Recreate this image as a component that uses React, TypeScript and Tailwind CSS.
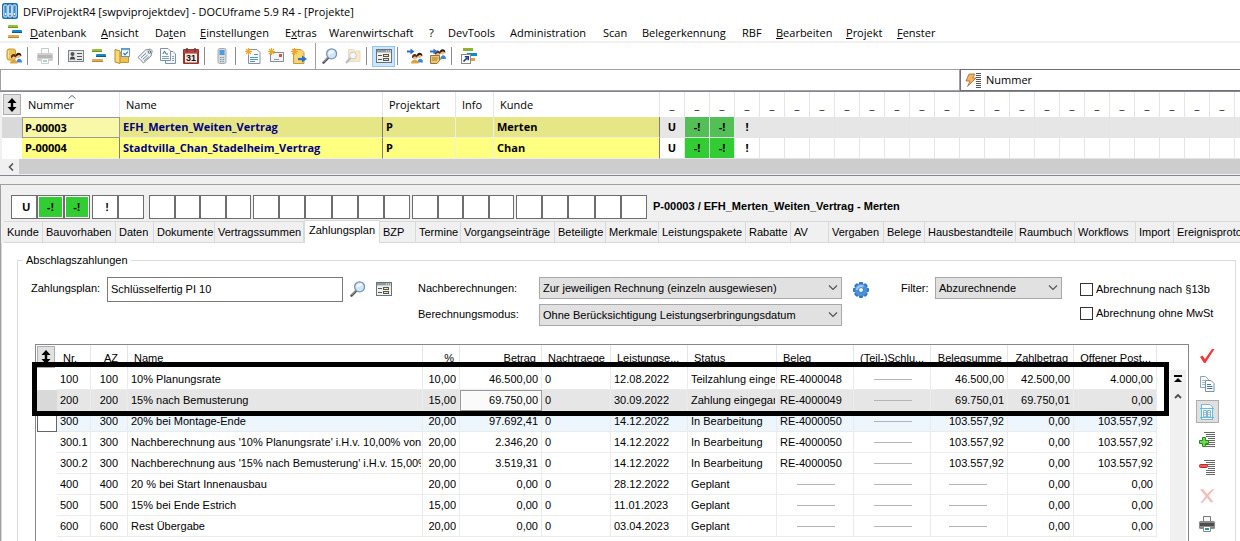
import React from "react";

const menuItems = [
  { pre: "", key: "D", post: "atenbank", w: "w-[71px]" },
  { pre: "", key: "A", post: "nsicht", w: "w-[54px]" },
  { pre: "Da", key: "t", post: "en", w: "w-[45px]" },
  { pre: "", key: "E", post: "instellungen", w: "w-[85px]" },
  { pre: "E", key: "x", post: "tras", w: "w-[44px]" },
  { pre: "Warenwirtschaft", key: "", post: "", w: "w-[100px]" },
  { pre: "?", key: "", post: "", w: "w-[19px]" },
  { pre: "DevTools", key: "", post: "", w: "w-[62px]" },
  { pre: "Administration", key: "", post: "", w: "w-[93px]" },
  { pre: "Scan", key: "", post: "", w: "w-[39px]" },
  { pre: "Belegerkennung", key: "", post: "", w: "w-[100px]" },
  { pre: "RBF", key: "", post: "", w: "w-[34px]" },
  { pre: "", key: "B", post: "earbeiten", w: "w-[70px]" },
  { pre: "", key: "P", post: "rojekt", w: "w-[51px]" },
  { pre: "", key: "F", post: "enster", w: "w-[50px]" },
];

const tabs = [
  { label: "Kunde", w: "w-[39px]" },
  { label: "Bauvorhaben", w: "w-[73px]" },
  { label: "Daten", w: "w-[38px]" },
  { label: "Dokumente", w: "w-[61px]" },
  { label: "Vertragssummen", w: "w-[89px]" },
  { label: "Zahlungsplan", w: "w-[76px]" },
  { label: "BZP", w: "w-[36px]" },
  { label: "Termine", w: "w-[45px]" },
  { label: "Vorgangseinträge", w: "w-[94px]" },
  { label: "Beteiligte", w: "w-[51px]" },
  { label: "Merkmale", w: "w-[53px]" },
  { label: "Leistungspakete", w: "w-[87px]" },
  { label: "Rabatte", w: "w-[45px]" },
  { label: "AV", w: "w-[38px]" },
  { label: "Vergaben", w: "w-[55px]" },
  { label: "Belege", w: "w-[41px]" },
  { label: "Hausbestandteile", w: "w-[91px]" },
  { label: "Raumbuch", w: "w-[59px]" },
  { label: "Workflows", w: "w-[61px]" },
  { label: "Import", w: "w-[38px]" },
  { label: "Ereignisprotokoll", w: "w-[100px]" },
];

const payments = [
  ["100", "100", "10% Planungsrate", "10,00", "46.500,00", "0", "12.08.2022", "Teilzahlung eingegangen", "RE-4000048", "", "46.500,00", "42.500,00", "4.000,00"],
  ["200", "200", "15% nach Bemusterung", "15,00", "69.750,00", "0", "30.09.2022", "Zahlung eingegangen", "RE-4000049", "", "69.750,01", "69.750,01", "0,00"],
  ["300", "300", "20% bei Montage-Ende", "20,00", "97.692,41", "0", "14.12.2022", "In Bearbeitung", "RE-4000050", "", "103.557,92", "0,00", "103.557,92"],
  ["300.1", "300", "Nachberechnung aus '10% Planungsrate' i.H.v. 10,00% von", "20,00", "2.346,20", "0", "14.12.2022", "In Bearbeitung", "RE-4000050", "", "103.557,92", "0,00", "103.557,92"],
  ["300.2", "300", "Nachberechnung aus '15% nach Bemusterung' i.H.v. 15,00%", "20,00", "3.519,31", "0", "14.12.2022", "In Bearbeitung", "RE-4000050", "", "103.557,92", "0,00", "103.557,92"],
  ["400", "400", "20 % bei Start Innenausbau", "20,00", "0,00", "0", "28.12.2022", "Geplant", "", "", "", "0,00", "0,00"],
  ["500", "500", "15% bei Ende Estrich", "15,00", "0,00", "0", "11.01.2023", "Geplant", "", "", "", "0,00", "0,00"],
  ["600", "600", "Rest Übergabe", "20,00", "0,00", "0", "03.04.2023", "Geplant", "", "", "", "0,00", "0,00"],
];

const RIGHT = { head: "pr-[5px] text-right", cell: "pr-[3px] text-right" };
const LEFT = { head: "pl-1.5 text-left", cell: "pl-[3px] pr-px text-left" };
const INDENTED_RIGHT = { head: "pr-[9px] text-right", cell: "pr-[9px] text-right" };

const paymentColumns = [
  { label: "Nr.", w: "w-[34px]", align: LEFT },
  { label: "AZ", w: "w-[37px]", align: INDENTED_RIGHT },
  { label: "Name", w: "w-[295px]", align: LEFT },
  { label: "%", w: "w-[37px]", align: RIGHT },
  { label: "Betrag", w: "w-[82px]", align: RIGHT },
  { label: "Nachtraege", w: "w-[69px]", align: LEFT },
  { label: "Leistungse...", w: "w-[77px]", align: LEFT },
  { label: "Status", w: "w-[89px]", align: LEFT },
  { label: "Beleg", w: "w-[77px]", align: LEFT },
  { label: "(Teil-)Schlu...", w: "w-[77px]", align: LEFT },
  { label: "Belegsumme", w: "w-[77px]", align: RIGHT },
  { label: "Zahlbetrag", w: "w-[66px]", align: RIGHT },
  { label: "Offener Post...", w: "w-[83px]", align: RIGHT },
];

const flagColumns = Array.from({ length: 24 }, (_, i) => i);
const flags = ["U", "-!", "-!", "!"];

function Svg({ children, faded = false }: { children: React.ReactNode; faded?: boolean }) {
  return (
    <svg viewBox="0 0 16 16" aria-hidden="true" className={faded ? "h-4 w-4 shrink-0 opacity-40" : "h-4 w-4 shrink-0"}>
      {children}
    </svg>
  );
}

function GanttIcon() {
  return (
    <Svg>
      <rect x="1" y="1" width="10" height="3" rx="1" fill="#9bbd3c" />
      <rect x="1" y="3" width="10" height="1" fill="#6f9420" />
      <rect x="5" y="6" width="10" height="3" rx="1" fill="#1586c8" />
      <rect x="5" y="8" width="10" height="1" fill="#0c5c94" />
      <rect x="1" y="11" width="11" height="3" rx="1" fill="#e3aa52" />
      <rect x="1" y="13" width="11" height="1" fill="#b98536" />
    </Svg>
  );
}

function PrinterIcon({ faded = false }: { faded?: boolean }) {
  return (
    <Svg faded={faded}>
      <path d="M4.5 0.5H11.5V6H4.5Z" fill="#f4f8fa" stroke="#777" />
      <rect x="0" y="5" width="16" height="8" rx="1.5" fill="#8a8a8a" />
      <rect x="1" y="7" width="14" height="3" fill="#4d4d4d" />
      <path d="M4.5 10.5H11.5V15.5H4.5Z" fill="#fff" stroke="#888" />
      <path d="M6 12H8V14H6Z" fill="#2ba34a" />
      <path d="M8 12H10V14H8Z" fill="#2588d0" />
    </Svg>
  );
}

function SearchIcon() {
  return (
    <Svg>
      <path d="M6.4 9.6L1.5 14.7" stroke="#555" strokeWidth="2.4" strokeLinecap="round" />
      <path d="M6 9.3L1.6 14" stroke="#ccc" strokeWidth="0.8" />
      <circle cx="9.6" cy="5.8" r="5" fill="#cfe5fa" stroke="#7894ae" strokeWidth="1.3" />
      <path d="M6.4 6.2C6.7 3.3 9 2 12.4 2.9C11.4 5.4 9 6.2 6.4 6.2Z" fill="#f4faff" />
    </Svg>
  );
}

function FormIcon() {
  return (
    <Svg>
      <rect x="0.5" y="1.5" width="15" height="13" fill="#f1f1ec" stroke="#68727a" />
      <rect x="1" y="2" width="14" height="2.4" fill="#8f999f" />
      <path d="M10 3H11M12 3H13M14 3H15" stroke="#fff" />
      <path d="M2 7.5H6M2 11.5H6" stroke="#555" />
      <rect x="7.5" y="6.5" width="5" height="2" fill="#ffe88a" stroke="#555" />
      <rect x="7.5" y="10.5" width="5" height="2" fill="#e0e0e0" stroke="#555" />
    </Svg>
  );
}

function People() {
  return (
    <>
      <path d="M10.5 14.5C10.5 9.5 16 9.5 16 14.5Z" fill="#3e86da" />
      <circle cx="12.6" cy="7.6" r="2.3" fill="#efb880" />
      <path d="M9.8 8.6C9 3.6 15.8 3.6 15.4 8.2L13 6.8Z" fill="#2c1c14" />
      <path d="M4 15.5C4 10.5 11.5 10.5 11.5 15.5Z" fill="#d9a63c" />
      <circle cx="7.8" cy="9.2" r="2.3" fill="#f2bd85" />
      <path d="M5 10.2C4.2 4.8 10.8 4.8 10.5 9.8L7.8 8.2Z" fill="#5a3018" />
    </>
  );
}

function UserIcon() {
  return (
    <Svg>
      <rect x="1" y="1" width="8.5" height="11" rx="2" fill="#edc257" stroke="#c99931" />
      <path d="M2.5 3V10" stroke="#fbe7a5" />
      <People />
    </Svg>
  );
}

function PeopleArrowIcon({ note = false }: { note?: boolean }) {
  return (
    <Svg>
      <g transform={note ? "translate(0 -3.5)" : ""}>
        <People />
      </g>
      {note && <path d="M0.5 7.5H9.5V12.5L7 15.5H0.5Z" fill="#e8c972" stroke="#94733a" />}
      {note && <path d="M2 10H8M2 12H7" stroke="#a47d32" />}
      <path d="M0 2.5H3.5V0.5L7.5 3.5L3.5 6.5V4.5H0Z" fill="#2d6fce" />
    </Svg>
  );
}

function CardIcon() {
  return (
    <Svg>
      <rect x="0.5" y="2.5" width="15" height="11" fill="#e6e9ea" stroke="#7c858c" />
      <circle cx="4.5" cy="6" r="2" fill="#555" />
      <path d="M1.8 11.5C1.8 7.5 7.2 7.5 7.2 11.5Z" fill="#444" />
      <path d="M9 5.5H14M9 8.5H14M9 11.5H14" stroke="#555" />
    </Svg>
  );
}

function FolderCalendarIcon() {
  return (
    <Svg>
      <path d="M3.5 4.5H14.5V14.5H3.5Z" fill="#ecc150" stroke="#c4962e" />
      <path d="M1 1.5L6 3V15.5L1 14Z" fill="#f7d978" stroke="#b98b26" />
      <rect x="7.5" y="0.5" width="8" height="8" fill="#fff" stroke="#6b93b8" />
      <path d="M8 1.5H15" stroke="#66a7dc" strokeWidth="1.5" />
      <path d="M9.5 5L11 6.8L14 3.6" stroke="#2770b4" strokeWidth="1.2" fill="none" />
    </Svg>
  );
}

function TagIcon() {
  return (
    <Svg>
      <path d="M8.5 2L13.5 1L15.2 2.8L14 8L6.5 15L1 9.3Z" fill="#edf3f6" stroke="#7f8b94" />
      <circle cx="12.4" cy="4" r="1.3" fill="#fff" stroke="#5a6770" />
      <path d="M4 9.8L9 5.2M5.8 11.3L10.5 7.1M7.2 12.9L11.8 8.7" stroke="#7b8d99" />
    </Svg>
  );
}

function DocsIcon() {
  return (
    <Svg>
      <path d="M5.5 3.5H13L15.5 6V15.5H5.5Z" fill="#f3f7fa" stroke="#7e91a2" />
      <path d="M0.5 0.5H8L10.5 3V12.5H0.5Z" fill="#fff" stroke="#7e91a2" />
      <path d="M2 10.5H9M2 8.5H9M12 8.5H14M12 10.5H14M12 12.5H14" stroke="#7aa0c8" />
      <path d="M3 6L4.5 3L6 6" stroke="#3567a8" fill="none" />
      <path d="M6 6H8" stroke="#3567a8" />
    </Svg>
  );
}

function Calendar31Icon() {
  return (
    <Svg>
      <rect x="0" y="1" width="16" height="15" rx="1" fill="#9c3230" />
      <rect x="1" y="2" width="14" height="3" fill="#c0403c" />
      <rect x="2" y="5.5" width="12" height="9" fill="#f6efe2" />
      <path d="M4 0V4M12 0V4" stroke="#4a4a4a" strokeWidth="1.6" />
      <text x="8" y="13" textAnchor="middle" fontSize="9" fontWeight="700" fontFamily="Liberation Sans, sans-serif" fill="#111">31</text>
    </Svg>
  );
}

function PhoneIcon() {
  return (
    <Svg>
      <rect x="4" y="0.5" width="8" height="15" rx="1.8" fill="#d6dbdf" stroke="#a3abb1" />
      <rect x="5.5" y="2" width="5" height="5" fill="#4a9be0" />
      <path d="M6 9.5H10M6 11.5H10M6 13.5H10" stroke="#8a939a" strokeDasharray="1 .5" />
    </Svg>
  );
}

function Spark() {
  return <path d="M3.5 0V7M0 3.5H7M1 1L6 6M6 1L1 6" stroke="#f0a526" strokeWidth="1.1" />;
}

function NewDocIcon() {
  return (
    <Svg>
      <path d="M3.5 1.5H12L15 4.5V15.5H3.5Z" fill="#f7fbfe" stroke="#8193a3" />
      <path d="M5 9.5H13M5 11.5H13M5 13.5H10M9 6.5H13" stroke="#5c8dbd" />
      <Spark />
    </Svg>
  );
}

function NewMailIcon() {
  return (
    <Svg>
      <rect x="2.5" y="4.5" width="13" height="9" fill="#f1f3f5" stroke="#8b8f94" />
      <rect x="11" y="6" width="3" height="3" fill="#d55249" />
      <path d="M6 11.5H11" stroke="#8799a8" />
      <Spark />
    </Svg>
  );
}

function NewFolderIcon() {
  return (
    <Svg>
      <path d="M2.5 1.5H10L13 4.5V15.5H2.5Z" fill="#f5d574" stroke="#c59a35" />
      <path d="M7 10H11V7.5L16 11L11 14.5V12.3H7Z" fill="#2e6fd0" />
      <Spark />
    </Svg>
  );
}

function SearchFolderIcon() {
  return (
    <Svg faded>
      <path d="M3.5 1.5H8L10 3H15V13.5H3.5Z" fill="#edc97d" stroke="#cfa95c" />
      <path d="M5.5 10L1 15" stroke="#555" strokeWidth="2" />
      <circle cx="8" cy="7.5" r="3.4" fill="#e4f0fa" stroke="#777" />
    </Svg>
  );
}

function ShortcutIcon() {
  return (
    <Svg>
      <rect x="2" y="0" width="10" height="3" fill="#8db52c" />
      <rect x="6" y="5" width="10" height="3" fill="#1586c8" />
      <rect x="8" y="10" width="6" height="3" fill="#dfa044" />
      <rect x="0.5" y="6.5" width="9" height="9" fill="#fff" stroke="#888" />
      <path d="M2.5 13.5L6 10M3.8 8.8H7.2V12.2" stroke="#173d85" strokeWidth="1.6" fill="none" />
    </Svg>
  );
}

function GearIcon() {
  return (
    <Svg>
      {[0, 45, 90, 135, 180, 225, 270, 315].map((a) => (
        <rect key={a} x="5.8" y="0" width="4.4" height="4" rx="1.4" fill="#2f74c4" transform={`rotate(${a} 8 8)`} />
      ))}
      <circle cx="8" cy="8" r="6.2" fill="#4a90db" />
      <path d="M2.8 8A5.2 5.2 0 0 1 11 3.8L9.4 6A2.8 2.8 0 0 0 5.2 8Z" fill="#9cc8f2" />
      <circle cx="8" cy="8" r="2.4" fill="#fff" stroke="#2f6fb8" strokeWidth="0.8" />
    </Svg>
  );
}

function AppIcon() {
  return (
    <Svg>
      <rect x="0" y="0" width="16" height="16" rx="2.5" fill="#1b6fae" />
      {[1.8, 6.3, 10.8].map((x) => (
        <g key={x}>
          <rect x={x} y="2" width="3.4" height="12" rx="0.8" fill="#3b8cc8" stroke="#fff" strokeWidth="0.9" />
          <rect x={x + 1.1} y="10" width="1.2" height="2" fill="#fff" />
        </g>
      ))}
    </Svg>
  );
}

function UpDownIcon() {
  return (
    <svg viewBox="0 0 10 14" aria-hidden="true" className="h-3.5 w-2.5">
      <path d="M5 0L9.5 5H6.2V9H9.5L5 14L.5 9H3.8V5H.5Z" fill="#000" />
    </svg>
  );
}

function BoltIcon() {
  return (
    <Svg>
      <path d="M5 2H11L8.5 6H12L3.5 14.5L6 9H2Z" fill="#f3b45c" stroke="#a8643a" strokeWidth="0.8" />
    </Svg>
  );
}

function ListRuleIcon() {
  return (
    <svg viewBox="0 0 5 16" aria-hidden="true" className="-ml-1 h-4 w-[5px]">
      <path d="M0 1.5H5M0 3.5H5M0 5.5H5M0 7.5H5M0 9.5H5M0 11.5H5M0 13.5H5M0 15.5H5" stroke="#555" />
    </svg>
  );
}

function CheckIcon() {
  return (
    <Svg>
      <path d="M1 9L3.5 7.5L6 11L13 1H15.5L6.5 15H5Z" fill="#ee3b3b" />
    </Svg>
  );
}

function CopyIcon() {
  return (
    <Svg>
      <path d="M1.5 0.5H6.5L9.5 3.5V11.5H1.5Z" fill="#f7fbfe" stroke="#90a2b3" />
      <path d="M6.5 4.5H12L15 7.5V15.5H6.5Z" fill="#fff" stroke="#7d8fa1" />
      <path d="M3 4.5H6M3 6.5H6M3 8.5H6" stroke="#9cbad6" />
      <path d="M8 8.5H12M8 10.5H13.5M8 12.5H13.5" stroke="#3f78b5" />
    </Svg>
  );
}

function GridDocIcon() {
  return (
    <Svg>
      <path d="M2.5 0.5H11L13.5 3V15.5H2.5Z" fill="#f8fcff" stroke="#8cb3cb" />
      <path d="M4.5 6.5H7.5V13H4.5ZM8.5 6.5H11.5V13H8.5Z" fill="#e4f2fa" stroke="#8cb3cb" />
      <path d="M4.5 8.5H7.5M4.5 10.5H7.5M8.5 8.5H11.5M8.5 10.5H11.5" stroke="#8cb3cb" strokeWidth="0.6" />
      <path d="M1 4.5H15M1 13.5H15M2.5 0V16M13.5 3V16" stroke="#5fbce6" />
    </Svg>
  );
}

function LineIcon({ add = false }: { add?: boolean }) {
  return (
    <Svg>
      <path d="M5 0.5H16M7 2.5H16M7 4.5H16M9 6.5H16M9 8.5H16M7 10.5H16M7 12.5H16M7 14.5H16" stroke="#666" />
      {add ? (
        <path d="M3.5 5.5H6.5V8.5H9.5V11.5H6.5V14.5H3.5V11.5H.5V8.5H3.5Z" fill="#6cdb4e" stroke="#248f1f" />
      ) : (
        <rect x="0.5" y="4.5" width="8" height="3" rx="1" fill="#f35252" stroke="#b92b2b" />
      )}
    </Svg>
  );
}

function CrossIcon() {
  return (
    <Svg faded>
      <path d="M1 1.5L4 1L8 6L13 1.5L15.5 1L9.5 7.7L14.5 14L12 14.5L8 9.5L3.5 15H1.5L6.6 8Z" fill="#dd5c51" />
    </Svg>
  );
}

function ToolButton({ label, children, active = false }: { label: string; children: React.ReactNode; active?: boolean }) {
  return (
    <button
      type="button"
      aria-label={label}
      className={
        active
          ? "flex h-[21px] w-[23px] shrink-0 items-center justify-center border border-[#92c6f2] bg-[#cce5fb]"
          : "flex h-[21px] w-[23px] shrink-0 items-center justify-center"
      }
    >
      {children}
    </button>
  );
}

function Separator() {
  return <div className="h-[18px] w-2 shrink-0 border-l-2 border-transparent"><div className="h-full w-px bg-[#8c8c8c]" /></div>;
}

function ComboBox({ id, value, width }: { id: string; value: string; width: string }) {
  return (
    <div className={"relative h-[22px] " + width}>
      <select id={id} defaultValue={value} className="h-full w-full appearance-none border border-[#a8a8a8] bg-[#e1e1e1] pl-[3px] pr-5 text-[11px] outline-none">
        <option>{value}</option>
      </select>
      <svg viewBox="0 0 10 6" aria-hidden="true" className="pointer-events-none absolute right-1 top-2 h-1.5 w-2.5">
        <path d="M1 0.5L5 4.5L9 0.5" fill="none" stroke="#555" strokeWidth="1.2" />
      </svg>
    </div>
  );
}

function FlagBox({ text = "", green = false }: { text?: string; green?: boolean }) {
  return (
    <div className="h-6 flex-1 border border-[#6e6e6e] bg-white p-px">
      <div className={green ? "flex h-full items-center justify-center bg-[#32cd32]" : "flex h-full items-center justify-center pl-1"}>{text}</div>
    </div>
  );
}

function FlagGroup({ count, width }: { count: number; width: string }) {
  return (
    <div className={"flex " + width}>
      {Array.from({ length: count }, (_, i) => <FlagBox key={i} />)}
    </div>
  );
}

function ProjectTable() {
  const headCell = "border-r border-[#e5e5e5] pl-1.5 text-left font-normal";
  const rows = [
    { nr: "P-00003", name: "EFH_Merten_Weiten_Vertrag", customer: "Merten", selected: true },
    { nr: "P-00004", name: "Stadtvilla_Chan_Stadelheim_Vertrag", customer: "Chan", selected: false },
  ];
  return (
    <div className="overflow-hidden border-l-2 border-[#f0f0f0]">
      <table className="w-[1258px] table-fixed border-separate border-spacing-0 whitespace-nowrap">
        <colgroup>
          <col className="w-5" />
          <col className="w-[98px]" />
          <col className="w-[263px]" />
          <col className="w-[73px]" />
          <col className="w-[38px]" />
          <col className="w-[166px]" />
          {flagColumns.map((i) => <col key={i} className="w-[25px]" />)}
        </colgroup>
        <thead>
          <tr className="h-[25px]">
            <th className="p-0">
              <button type="button" aria-label="Sortierung" className="mx-auto flex h-[21px] w-[18px] items-center justify-center border border-[#adadad] bg-[#e1e1e1]">
                <UpDownIcon />
              </button>
            </th>
            <th className={headCell}>
              <div className="relative">
                <svg viewBox="0 0 8 4" aria-hidden="true" className="absolute -top-0.5 left-10 h-1 w-2"><path d="M.5 3.5L4 .5L7.5 3.5" stroke="#666" fill="none" /></svg>
                Nummer
              </div>
            </th>
            <th className={headCell}>Name</th>
            <th className={headCell}>Projektart</th>
            <th className={headCell}>Info</th>
            <th className={headCell}>Kunde</th>
            {flagColumns.map((i) => <th key={i} className="border-r border-[#e5e5e5] p-0 text-center font-normal">_</th>)}
          </tr>
        </thead>
        <tbody className="font-bold">
          {rows.map((r) => {
            const yellow = r.selected ? "bg-[#e6e687]" : "bg-[#ffff80]";
            const light = "border-b border-r border-[#f0f0e0] py-0 pl-[3px] text-black ";
            const dark = "border-b border-r border-b-[#f0f0e0] border-r-[#808080] py-0 pl-[3px] ";
            return (
              <tr key={r.nr} className="h-[21px] leading-[18px]">
                <td className={r.selected ? "bg-[#d9d9d9] p-0" : "bg-white p-0"} />
                <td className={r.selected ? "border border-[#999] bg-[#f8f8a8] py-0 pl-0.5" : dark + yellow}>{r.nr}</td>
                <td className={dark + "text-[#000080] " + yellow}>{r.name}</td>
                <td className={light + yellow}>P</td>
                <td className={light + yellow} />
                <td className={dark + yellow}>{r.customer}</td>
                {flagColumns.map((i) => {
                  const green = i === 1 || i === 2;
                  const base = "border-b border-r border-[#e5e5e9] p-0 text-center ";
                  const fill = green
                    ? r.selected ? "bg-[#52bf57]" : "bg-[#32cd32]"
                    : r.selected ? "bg-[#e6e6e6]" : "bg-white";
                  return <td key={i} className={base + fill}>{flags[i] ?? ""}</td>;
                })}
              </tr>
            );
          })}
        </tbody>
      </table>
    </div>
  );
}

function PaymentTable() {
  return (
    <table className="w-[1120px] shrink-0 table-fixed border-separate border-spacing-0 whitespace-nowrap">
      <colgroup>
        <col className="w-5" />
        {paymentColumns.map((c) => <col key={c.label} className={c.w} />)}
      </colgroup>
      <thead>
        <tr className="h-6">
          <th className="p-0">
            <button type="button" aria-label="Sortierung" className="flex h-[22px] w-[18px] items-center justify-center border border-[#adadad] bg-[#e1e1e1]">
              <UpDownIcon />
            </button>
          </th>
          {paymentColumns.map((c) => (
            <th key={c.label} className={"border-r border-[#e5e5e5] pb-0 pt-0.5 font-normal " + c.align.head}>{c.label}</th>
          ))}
        </tr>
      </thead>
      <tbody>
        {payments.map((row, r) => (
          <tr key={row[0]} className={r === 1 ? "h-[21px] bg-[#e6e6e6]" : r === 2 ? "h-[21px] bg-[#edf5fd]" : "h-[21px]"}>
            <td className={r === 1 ? "bg-[#d9d9d9] p-0" : r === 2 ? "border border-[#666] bg-white p-0" : "bg-white p-0"} />
            {row.map((v, c) => {
              const line = c === 8 || c === 9 || (c === 10 && v === "");
              const focused = r === 1 && c === 4;
              return (
                <td
                  key={c}
                  className={(focused ? "border border-[#999] bg-[#fafafa] " : "border-b border-r border-[#ebebeb] ") + "py-0 " + paymentColumns[c].align.cell}
                >
                  {line && v === "" ? <div className="mx-auto h-px w-[38px] bg-[#b5b5b5]" /> : <div className="overflow-hidden">{v}</div>}
                </td>
              );
            })}
          </tr>
        ))}
      </tbody>
    </table>
  );
}

export default function App() {
  return (
    <div className="flex h-screen flex-col overflow-hidden bg-[#f0f0f0] font-['Open_Sans','Noto_Sans',sans-serif] text-[11px] leading-4 text-black">
      <header className="bg-white">
        <div className="flex h-[22px] items-center gap-[5px] pl-0.5">
          <AppIcon />
          <h1 className="whitespace-nowrap pt-0.5">DFViProjektR4 [swpviprojektdev] - DOCUframe 5.9 R4 - [Projekte]</h1>
        </div>
        <nav className="flex h-[19px] items-center pl-[7px]">
          <GanttIcon />
          <div className="flex pl-[7px] pt-0.5">
            {menuItems.map((m) => (
              <button type="button" key={m.pre + m.key + m.post} className={"shrink-0 whitespace-nowrap text-left " + m.w}>
                {m.pre}<span className="underline">{m.key}</span>{m.post}
              </button>
            ))}
          </div>
        </nav>
        <div className="flex h-7 items-center border-t-2 border-[#f0f0f0] pl-0.5">
          <ToolButton label="Benutzer"><UserIcon /></ToolButton>
          <Separator />
          <ToolButton label="Drucken"><PrinterIcon faded /></ToolButton>
          <Separator />
          <ToolButton label="Adressen"><CardIcon /></ToolButton>
          <ToolButton label="Projekte"><GanttIcon /></ToolButton>
          <ToolButton label="Aufgaben"><FolderCalendarIcon /></ToolButton>
          <ToolButton label="Artikel"><TagIcon /></ToolButton>
          <ToolButton label="Dokumente"><DocsIcon /></ToolButton>
          <ToolButton label="Kalender"><Calendar31Icon /></ToolButton>
          <Separator />
          <ToolButton label="Telefon"><PhoneIcon /></ToolButton>
          <Separator />
          <ToolButton label="Neues Dokument"><NewDocIcon /></ToolButton>
          <ToolButton label="Neue E-Mail"><NewMailIcon /></ToolButton>
          <ToolButton label="Neuer Vorgang"><NewFolderIcon /></ToolButton>
          <div className="flex h-full w-2 justify-end pr-0.5"><div className="w-px bg-[#a0a0a0]" /></div>
          <ToolButton label="Suchen"><SearchIcon /></ToolButton>
          <ToolButton label="Ordner durchsuchen"><SearchFolderIcon /></ToolButton>
          <Separator />
          <ToolButton label="Formular" active><FormIcon /></ToolButton>
          <Separator />
          <ToolButton label="Kontakt zuordnen"><PeopleArrowIcon /></ToolButton>
          <ToolButton label="Notiz zuordnen"><PeopleArrowIcon note /></ToolButton>
          <Separator />
          <ToolButton label="Projektverknüpfung"><ShortcutIcon /></ToolButton>
        </div>
      </header>

      <section className="bg-white">
        <div className="flex h-[22px]">
          <input aria-label="Suchbegriff" className="w-[960px] border border-[#a0a0a6] bg-white px-1 outline-none" />
          <button type="button" className="flex min-w-0 flex-1 items-center border border-r-0 border-[#70707a] pl-[3px]">
            <BoltIcon />
            <ListRuleIcon />
            <span className="pl-[5px]">Nummer</span>
          </button>
        </div>
        <div className="h-px bg-[#828790]" />
        <ProjectTable />
        <div className="flex h-[15px] items-center border-l-2 border-[#f0f0f0] bg-[#cdcdcd]">
          <button type="button" aria-label="Nach links" className="flex h-full w-[17px] items-center justify-center bg-[#f0f0f0]">
            <svg viewBox="0 0 6 8" aria-hidden="true" className="h-2 w-1.5"><path d="M5 .5L1.5 4L5 7.5" stroke="#555" strokeWidth="1.6" fill="none" /></svg>
          </button>
        </div>
        <div className="h-0.5 border-b border-[#828790] bg-[#f0f0f0]" />
      </section>

      <main className="mt-2 flex min-h-0 flex-1 flex-col border-l border-t border-[#a0a0a0] font-['Liberation_Sans',Arial,sans-serif] text-[11px] leading-[13px]">
        <div className="flex h-[35px] shrink-0 items-end gap-x-0.5 pb-px pl-[10px] font-bold">
          <div className="flex w-[79px]">
            <FlagBox text="U" />
            <FlagBox text="-!" green />
            <FlagBox text="-!" green />
          </div>
          <div className="mr-[3px] flex w-[52px]">
            <FlagBox text="!" />
            <FlagBox />
          </div>
          <FlagGroup count={4} width="w-[102px]" />
          <FlagGroup count={6} width="w-[157px]" />
          <FlagGroup count={4} width="w-[102px]" />
          <FlagGroup count={5} width="w-[131px]" />
          <p className="self-end whitespace-nowrap pb-1.5 pl-1">P-00003 / EFH_Merten_Weiten_Vertrag - Merten</p>
        </div>

        <div className="flex h-[23px] shrink-0 items-end overflow-hidden pl-[3px]" role="tablist">
          {tabs.map((t) => {
            const active = t.label === "Zahlungsplan";
            return (
              <button
                key={t.label}
                type="button"
                role="tab"
                aria-selected={active}
                className={
                  (active
                    ? "h-[23px] border-l border-r border-t border-[#d9d9d9] bg-white pb-1 pl-1 "
                    : "h-[22px] border-b border-r border-t border-[#d9d9d9] pl-[3px] ") +
                  "shrink-0 whitespace-nowrap text-left " + t.w
                }
              >
                {t.label}
              </button>
            );
          })}
        </div>

        <div className="flex min-h-0 flex-1 border-l border-[#d9d9d9] bg-white pl-[15px] pr-1 pt-[11px]">
          <fieldset className="flex min-w-0 flex-1 flex-col border border-b-0 border-[#dcdcdc]">
            <legend className="ml-[5px] px-[3px]">Abschlagszahlungen</legend>
            <div className="flex items-start pl-[13px] pt-[10px]">
              <label htmlFor="plan" className="w-[76px] pt-[5px]">Zahlungsplan:</label>
              <input id="plan" defaultValue="Schlüsselfertig PI 10" className="h-[25px] w-[236px] border border-[#7a7a7a] bg-white px-[3px] pb-0.5 outline-none" />
              <button type="button" aria-label="Plan suchen" className="ml-[7px] pt-1"><SearchIcon /></button>
              <button type="button" aria-label="Plan öffnen" className="ml-2.5 pt-1"><FormIcon /></button>
              <div className="ml-[26px] grid grid-cols-[121px_303px] gap-y-[5px]">
                <label htmlFor="calc" className="pt-[5px]">Nachberechnungen:</label>
                <ComboBox id="calc" value="Zur jeweiligen Rechnung (einzeln ausgewiesen)" width="w-full" />
                <label htmlFor="mode" className="pt-1">Berechnungsmodus:</label>
                <ComboBox id="mode" value="Ohne Berücksichtigung Leistungserbringungsdatum" width="w-full" />
              </div>
              <button type="button" aria-label="Einstellungen" className="ml-[11px] pt-[5px]"><GearIcon /></button>
              <label htmlFor="filter" className="ml-8 w-[34px] pt-[5px]">Filter:</label>
              <ComboBox id="filter" value="Abzurechnende" width="w-[127px]" />
              <div className="ml-[18px] flex flex-col gap-[11px] whitespace-nowrap pt-1.5">
                <label className="flex h-[13px] items-center gap-[3px]">
                  <input type="checkbox" className="h-[13px] w-[13px] appearance-none border border-[#333] bg-white" />
                  Abrechnung nach §13b
                </label>
                <label className="flex h-[13px] items-center gap-[3px]">
                  <input type="checkbox" className="h-[13px] w-[13px] appearance-none border border-[#333] bg-white" />
                  Abrechnung ohne MwSt
                </label>
              </div>
            </div>

            <div className="mt-[18px] flex min-h-0 flex-1 pl-[17px] pr-4">
              <div className="relative flex min-w-0 flex-1 items-start border border-b-0 border-[#828790] pl-px">
                <PaymentTable />
                <div className="ml-auto mr-0.5 mt-[25px] flex w-4 shrink-0 flex-col items-center self-stretch bg-[#f0f0f0]">
                  <button type="button" aria-label="Zum Anfang" className="flex h-[17px] w-full items-center justify-center">
                    <svg viewBox="0 0 8 8" aria-hidden="true" className="h-2 w-2"><path d="M0 0H8V2H0ZM4 3L8 7H0Z" fill="#000" /></svg>
                  </button>
                  <button type="button" aria-label="Nach oben" className="flex h-[17px] w-full items-center justify-center">
                    <svg viewBox="0 0 8 6" aria-hidden="true" className="h-1.5 w-2"><path d="M1 5L4 2L7 5" stroke="#505050" strokeWidth="1.8" fill="none" /></svg>
                  </button>
                </div>
                <div className="pointer-events-none absolute -left-1 top-[17px] h-[54px] w-[1137px] border-[5px] border-black" />
              </div>
              <div className="ml-1.5 flex w-6 flex-col items-center gap-[5px]">
                <button type="button" aria-label="Übernehmen" className="flex h-[23px] w-[23px] items-center justify-center"><CheckIcon /></button>
                <button type="button" aria-label="Kopieren" className="flex h-[23px] w-[23px] items-center justify-center"><CopyIcon /></button>
                <button type="button" aria-label="Tabellenansicht" className="flex h-[23px] w-[23px] items-center justify-center border border-[#adadad] bg-[#e0e0e0]"><GridDocIcon /></button>
                <button type="button" aria-label="Zeile einfügen" className="flex h-[23px] w-[23px] items-center justify-center"><LineIcon add /></button>
                <button type="button" aria-label="Zeile entfernen" className="flex h-[23px] w-[23px] items-center justify-center"><LineIcon /></button>
                <button type="button" aria-label="Löschen" className="flex h-[23px] w-[23px] items-center justify-center"><CrossIcon /></button>
                <button type="button" aria-label="Liste drucken" className="flex h-[23px] w-[23px] items-center justify-center"><PrinterIcon /></button>
              </div>
            </div>
          </fieldset>
        </div>
      </main>
    </div>
  );
}
